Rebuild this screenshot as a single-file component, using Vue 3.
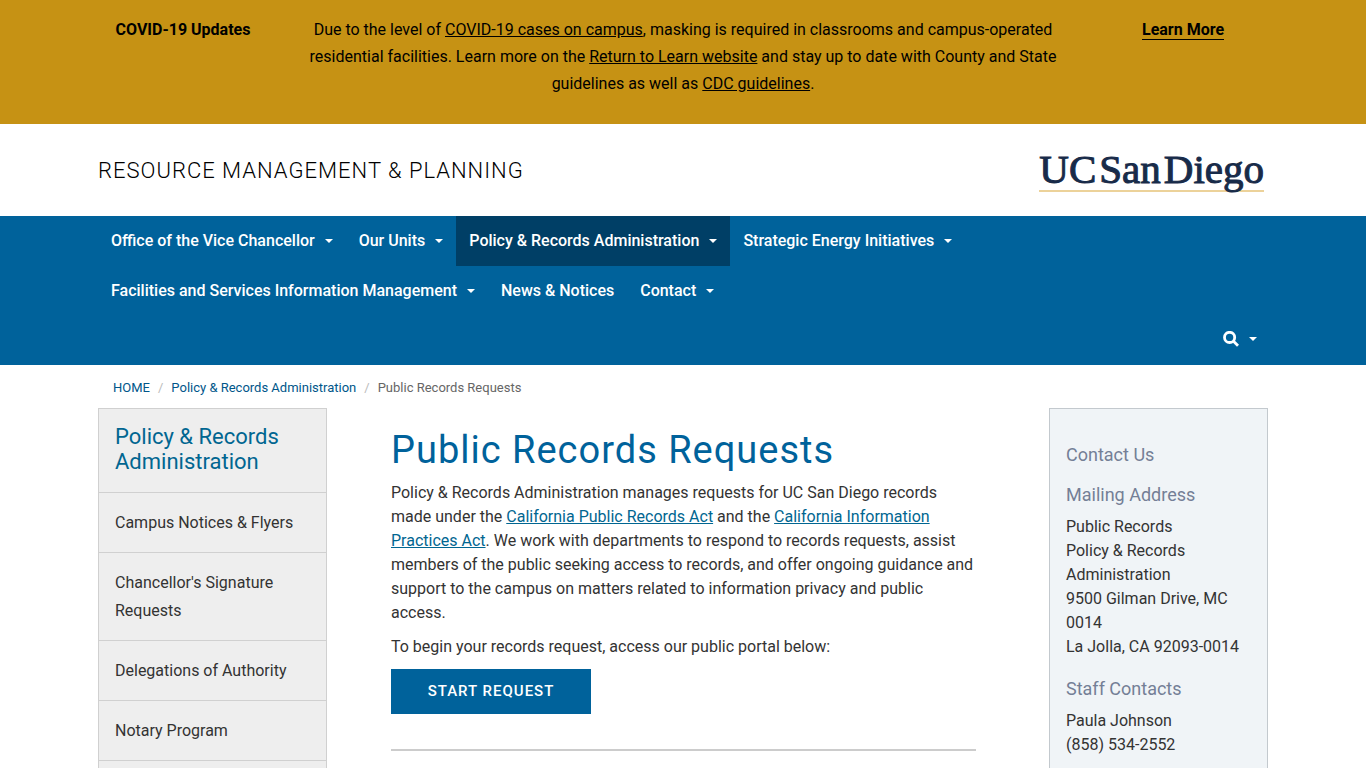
<template>
  <div class="page">
    <section class="alert" aria-label="COVID-19 Updates">
      <div class="alert-inner">
        <strong>COVID-19 Updates</strong>
        <p>
          Due to the level of <a href="#">COVID-19 cases on campus</a>, masking is required in
          classrooms and campus-operated residential facilities. Learn more on the
          <a href="#">Return to Learn website</a> and stay up to date with County and State
          guidelines as well as <a href="#">CDC guidelines</a>.
        </p>
        <div><a class="learn-more" href="#">Learn More</a></div>
      </div>
    </section>

    <header class="container header">
      <a class="site-title" href="#">Resource Management &amp; Planning</a>
      <a class="logo" href="#">
        <span>UC</span>
        <span>San</span>
        <span>Diego</span>
      </a>
    </header>

    <nav class="navbar">
      <div class="container">
        <ul class="menu">
          <li v-for="item in menu" :key="item.label">
            <a href="#" :class="{ active: item.active }">
              {{ item.label }}<span v-if="item.dropdown" class="caret"></span>
            </a>
          </li>
        </ul>
        <div class="search">
          <button type="button" aria-label="Search" @click="searchOpen = !searchOpen">
            <svg width="16" height="16" viewBox="0 0 16 16">
              <circle cx="6.6" cy="6.4" r="5.1" />
              <path d="M10 9.8L15 14.8" />
            </svg>
            <span class="caret"></span>
          </button>
          <input v-if="searchOpen" class="search-box" type="search" aria-label="Search this site" />
        </div>
      </div>
    </nav>

    <div class="container">
      <ol class="breadcrumb">
        <li><a href="#">HOME</a></li>
        <li><a href="#">Policy &amp; Records Administration</a></li>
        <li>Public Records Requests</li>
      </ol>

      <div class="columns">
        <aside class="sidebar">
          <h2><a href="#">Policy &amp; Records Administration</a></h2>
          <ul>
            <li v-for="link in sideLinks" :key="link">
              <a href="#">{{ link }}</a>
            </li>
          </ul>
        </aside>

        <main class="content">
          <h1>Public Records Requests</h1>
          <p>
            Policy &amp; Records Administration manages requests for UC San Diego records made under
            the <a href="#">California Public Records Act</a> and the
            <a href="#">California Information Practices Act</a>. We work with departments to
            respond to records requests, assist members of the public seeking access to records, and
            offer ongoing guidance and support to the campus on matters related to information
            privacy and public access.
          </p>
          <p>To begin your records request, access our public portal below:</p>
          <a class="btn" href="#">Start Request</a>
          <hr />
        </main>

        <aside class="contact">
          <h3>Contact Us</h3>
          <h3>Mailing Address</h3>
          <p>
            Public Records<br />
            Policy &amp; Records Administration<br />
            9500 Gilman Drive, MC 0014<br />
            La Jolla, CA 92093-0014
          </p>
          <h3>Staff Contacts</h3>
          <p>
            Paula Johnson<br />
            (858) 534-2552
          </p>
        </aside>
      </div>
    </div>
  </div>
</template>

<script setup>
import { ref } from 'vue'

const searchOpen = ref(false)

const menu = [
  { label: 'Office of the Vice Chancellor', dropdown: true },
  { label: 'Our Units', dropdown: true },
  { label: 'Policy & Records Administration', dropdown: true, active: true },
  { label: 'Strategic Energy Initiatives', dropdown: true },
  { label: 'Facilities and Services Information Management', dropdown: true },
  { label: 'News & Notices' },
  { label: 'Contact', dropdown: true }
]

const sideLinks = [
  'Campus Notices & Flyers',
  "Chancellor's Signature Requests",
  'Delegations of Authority',
  'Notary Program'
]
</script>

<style>
body {
  background: #fff;
}
</style>

<style scoped>
.page {
  font-family: Roboto, "Liberation Sans", sans-serif;
  font-size: 16px;
  line-height: 24px;
  color: #333;
}

.page * {
  box-sizing: border-box;
}

.container {
  max-width: 1170px;
  margin: 0 auto;
}

ul,
ol {
  list-style: none;
  margin: 0;
  padding: 0;
}

a {
  color: #016691;
}

/* Alert */
.alert {
  background: #c69214;
  color: #000;
  line-height: 27px;
  text-align: center;
  padding: 16px 0 27px;
}

.alert-inner {
  display: grid;
  grid-template-columns: 1fr 4fr 1fr;
  max-width: 1200px;
  margin: 0 auto;
}

.alert strong {
  font-weight: 700;
}

.alert p {
  margin: 0;
  padding: 0 15px;
}

.alert a {
  color: #000;
}

.alert .learn-more {
  font-weight: 700;
  text-decoration: none;
  border-bottom: 1px solid #000;
}

/* Header */
.header {
  display: flex;
  align-items: center;
  justify-content: space-between;
  padding: 25px 0 24px;
}

.site-title {
  color: #000;
  font-size: 22px;
  font-weight: 300;
  letter-spacing: 1px;
  text-decoration: none;
  text-transform: uppercase;
}

.logo {
  display: flex;
  gap: 3px;
  margin-right: 4px;
  border-bottom: 2px solid #ecd29a;
  color: #182b49;
  font-family: "Liberation Serif", serif;
  font-size: 41px;
  line-height: 41px;
  text-decoration: none;
  -webkit-text-stroke: 1px #182b49;
}

/* Navigation */
.navbar {
  background: #00629b;
}

.menu {
  display: flex;
  flex-wrap: wrap;
}

.menu a {
  display: flex;
  align-items: center;
  height: 50px;
  padding: 0 13px;
  color: #fff;
  font-weight: 500;
  text-decoration: none;
}

.menu a.active {
  background: #003f66;
}

.caret {
  margin-left: 10px;
  border-top: 4px solid #fff;
  border-left: 4px solid transparent;
  border-right: 4px solid transparent;
}

.search {
  position: relative;
  display: flex;
  justify-content: flex-end;
}

.search button {
  display: flex;
  align-items: center;
  padding: 15px 11px 18px;
  border: 0;
  background: none;
  cursor: pointer;
}

.search svg {
  fill: none;
  stroke: #fff;
  stroke-width: 2.8;
}

.search-box {
  position: absolute;
  top: 49px;
  right: 0;
  width: 300px;
  padding: 8px;
}

/* Breadcrumb */
.breadcrumb {
  display: flex;
  padding: 11px 15px 8px;
  color: #666;
  font-size: 13px;
}

.breadcrumb a {
  color: #00568a;
  text-decoration: none;
}

.breadcrumb li + li::before {
  content: "/";
  padding: 0 8px;
  color: #bbb;
}

.columns {
  display: grid;
  grid-template-columns: 229px 1fr 219px;
}

/* Left menu */
.sidebar {
  background: #eee;
  border: 1px solid #d0d0d0;
}

.sidebar a {
  text-decoration: none;
}

.sidebar h2 {
  margin: 0;
  padding: 15px 16px 18px;
  font-size: 22px;
  font-weight: 400;
  line-height: 25px;
}

.sidebar li a {
  display: block;
  padding: 16px 16px 15px;
  border-top: 1px solid #d0d0d0;
  color: #333;
  line-height: 28px;
}

.sidebar li:last-child {
  border-bottom: 1px solid #d0d0d0;
}

/* Article */
.content {
  padding: 20px 73px 16px 64px;
}

.content h1 {
  margin: 0 0 9px;
  color: #00629b;
  font-size: 38px;
  font-weight: 400;
  line-height: 44px;
  letter-spacing: 1px;
}

.content p {
  margin: 0 0 10px;
}

.btn {
  display: inline-block;
  min-width: 200px;
  padding: 10px 36px 11px;
  background: #00629b;
  color: #fff;
  font-size: 15px;
  font-weight: 500;
  text-align: center;
  letter-spacing: 1px;
  text-decoration: none;
  text-transform: uppercase;
}

.content hr {
  margin: 35px 0 0;
  border: 0;
  border-top: 2px solid #ccc;
}

/* Contact card */
.contact {
  padding: 16px;
  background: #f0f4f7;
  border: 1px solid #c3c9ce;
}

.contact h3 {
  margin: 20px 0 10px;
  color: #747f96;
  font-size: 18px;
  font-weight: 400;
  line-height: 20px;
}

.contact p {
  margin: 0;
}
</style>
